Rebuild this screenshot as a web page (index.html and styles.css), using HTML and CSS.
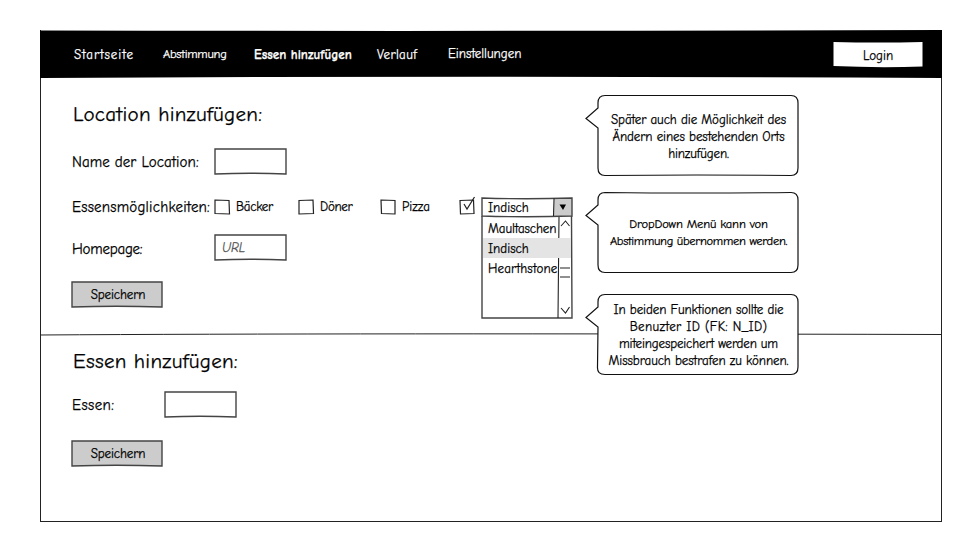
FILE: index.html
```html
<!DOCTYPE html>
<html lang="de">
<head>
<meta charset="utf-8">
<title>Essen hinzufügen</title>
<link rel="stylesheet" href="styles.css">
</head>
<body>
<div class="frame">
  <header class="bar">
    <svg class="sketch" viewBox="0 0 902 48"><path d="M0 .5Q450 1.5 902 0V48Q450 45.5 0 48Z"/></svg>
    <nav class="nav">
      <a class="n1">Startseite</a><a class="n2">Abstimmung</a><a class="n3 active">Essen hinzufügen</a><a class="n4">Verlauf</a><a class="n5">Einstellungen</a>
    </nav>
    <button class="login"><svg class="sketch" viewBox="0 0 90 25"><path class="white" d="M.5 0Q45 1 89.500 0V24.500Q45 26 .5 24Z"/></svg><span>Login</span></button>
  </header>
  <main>
    <section class="location">
      <h1>Location hinzufügen:</h1>
      <div class="row"><label class="l-name"><span>Name der Location:</span></label>
        <div class="field"><svg class="sketch" viewBox="0 0 73 27"><path class="box" d="M1 1H72V26Q36 24.500 1 26Z"/></svg><input aria-label="Name"></div></div>
      <div class="row options"><label class="l-options"><span>Essensmöglichkeiten:</span></label>
        <div class="check c1"><svg viewBox="0 0 16 18"><path d="M1 3L15 3.500L15.500 17L1 16.500Z"/></svg><span>Bäcker</span></div>
        <div class="check c2"><svg viewBox="0 0 16 18"><path d="M1 3.500L15 3L15.500 16.500L1 17Z"/></svg><span>Döner</span></div>
        <div class="check c3"><svg viewBox="0 0 16 18"><path d="M1 3L15 3.500L15 17L1.500 16.500Z"/></svg><span>Pizza</span></div>
        <div class="check c4"><svg viewBox="0 0 16 18"><path d="M1 3.500L14.500 3L15 16.500L1.500 17Z"/><path d="M5 7L8 12L15.500 0"/></svg></div>
        <div class="select">
          <svg class="sketch" viewBox="0 0 92 121"><path class="grey" d="M73 1.500H91V19H73Z"/><path class="box" d="M1 1Q45 2.500 91 1V19Q45 20.500 1 19Z"/><path class="box thin" d="M73 1.500L72.500 19"/><path class="arrow" d="M78.500 7.500H85L82 13Z"/></svg>
          <span class="value">Indisch</span>
          <div class="menu">
            <svg class="sketch" viewBox="0 0 92 103"><path class="box" d="M1 0V102H91L90.500 0"/><path class="box thin" d="M78 1L77 102M80 10L84.500 5L88.500 10M79 52H89M79 61H89M80 92L84.500 97L88.500 91"/></svg>
            <span class="o1"><i>Maultaschen</i></span><span class="o2 chosen"><i>Indisch</i></span><span class="o3"><i>Hearthstone</i></span>
          </div>
        </div>
      </div>
      <div class="row home"><label class="l-home"><span>Homepage:</span></label>
        <div class="field"><svg class="sketch" viewBox="0 0 73 27"><path class="box" d="M1 1H72V26Q36 24.500 1 26Z"/></svg><input aria-label="Homepage" placeholder="URL"></div></div>
      <button class="save"><svg class="sketch" viewBox="0 0 92 27"><path class="box grey" d="M1 1H91V26Q45 24.500 1 26Z"/></svg><span>Speichern</span></button>
    </section>
    <section class="food">
      <svg class="divider" viewBox="0 0 902 3"><path d="M0 2Q300 0 902 1.500"/></svg>
      <h1>Essen hinzufügen:</h1>
      <div class="row"><label class="l-food"><span>Essen:</span></label>
        <div class="field"><svg class="sketch" viewBox="0 0 73 27"><path class="box" d="M1 1H72V26Q36 24.500 1 26Z"/></svg><input aria-label="Essen"></div></div>
      <button class="save"><svg class="sketch" viewBox="0 0 92 27"><path class="box grey" d="M1 1H91V26Q45 24.500 1 26Z"/></svg><span>Speichern</span></button>
    </section>
  </main>
  <aside class="notes">
    <div class="note note-1"><svg class="sketch" viewBox="0 0 214 82"><path d="M20 .5H206Q213 .5 213 8V73Q213 80.500 206 80.500Q110 79.500 20 80.500Q13 80.500 13 73V33L1 23.500L13 13V8Q13 .5 20 .5Z"/></svg>
      <p><span class="t1">Später auch die Möglichkeit des</span><span class="t2">Ändern eines bestehenden Orts</span><span class="t3">hinzufügen.</span></p></div>
    <div class="note note-2"><svg class="sketch" viewBox="0 0 214 82"><path d="M20 .5Q110 1.500 206 .5Q213 .5 213 8V73Q213 80.500 206 80.500H20Q13 80.500 13 73V33L1 23.500L13 13V8Q13 .5 20 .5Z"/></svg>
      <p><span class="t4">DropDown Menü kann von</span><span class="t5">Abstimmung übernommen werden.</span></p></div>
    <div class="note note-3"><svg class="sketch" viewBox="0 0 214 82"><path d="M20 .5H206Q213 .5 213 8V73Q213 80.500 206 80.500H20Q12 80.500 12.500 73L13 33L1 23.500L13 13V8Q13 .5 20 .5Z"/></svg>
      <p><span class="t6">In beiden Funktionen sollte die</span><span class="t7">Benuzter ID (FK: N_ID)</span><span class="t8">miteingespeichert werden um</span><span class="t9">Missbrauch bestrafen zu können.</span></p></div>
  </aside>
</div>
</body>
</html>
```
FILE: styles.css
```css
* { box-sizing: border-box; }
body {
  margin: 0;
  padding: 30px 35px 0 40px;
  background: #fff;
  color: #000;
  font: 13px/17px "Comic Sans MS", "Comic Neue", "Open Sans", sans-serif;
  -webkit-text-stroke: .25px currentColor;
}
button, input { font: inherit; color: inherit; background: none; border: 0; padding: 0; }
svg { display: block; overflow: visible; }
.sketch { position: absolute; inset: 0; width: 100%; height: 100%; }
.frame { position: relative; width: 902px; height: 492px; border: 1px solid #222; border-top: 0; }
.bar { position: relative; height: 48px; margin: 0 -1px; display: flex; align-items: center; color: #fff; }
.nav { position: relative; display: flex; flex: 1; padding: 1px 0 0 34px; white-space: nowrap; }
.nav a { flex: none; }
.n1 { width: 89px; letter-spacing: .9px; }
.nav .n2 { width: 91px; font-size: 12.5px; letter-spacing: -.25px; }
.n3 { width: 123px; }
.n4 { width: 71px; letter-spacing: .35px; }
.n5 { width: 90px; margin-top: -1px; }
.active { font-weight: 700; }
.login { position: relative; width: 90px; height: 25px; margin-right: 19px; color: #000; }
.login span { position: relative; top: 1px; }
.save span { position: relative; left: 1px; }
.white { fill: #fff; }
.box { fill: none; stroke: #444; stroke-width: 1.4; }
.thin { stroke-width: 1.1; stroke: #222; }
.grey { fill: #ccc; }
.location { height: 256px; padding: 22px 0 0 31px; }
h1 { margin: 0; padding-left: 1px; font-size: 21px; line-height: 28px; font-weight: 400; letter-spacing: .27px; white-space: nowrap; }
.row { display: flex; height: 27px; align-items: center; }
.location .row { margin-top: 20px; }
.location .options { margin-top: 18px; }
.location .home { margin-top: 14px; }
.row label { width: 142px; font-size: 15px; line-height: 20px; white-space: nowrap; }
.l-name { letter-spacing: .05px; }
.l-options { letter-spacing: .2px; }
.row .l-home { letter-spacing: -.25px; padding-top: 2px; }
.l-food { letter-spacing: .4px; }
.field { position: relative; width: 73px; height: 27px; }
.field input { position: relative; display: block; width: 100%; height: 26px; padding-left: 8px; outline: 0; }
.field input::placeholder { color: #555; font-style: italic; opacity: 1; }
.check { display: flex; align-items: center; gap: 6px; white-space: nowrap; }
.check svg { width: 16px; height: 18px; fill: none; stroke: #222; stroke-width: 1.2; margin-top: -2px; }
.c1 { width: 84px; letter-spacing: -.3px; }
.c2 { width: 82px; letter-spacing: -.3px; }
.c3 { width: 79px; }
.c4 { width: 22px; }
.select { position: relative; width: 92px; height: 20px; }
.select > .sketch { height: 121px; }
.value { position: relative; display: block; padding: 2px 0 0 7px; }
.arrow { fill: #000; }
.menu { position: absolute; top: 19px; left: 0; width: 92px; height: 103px; padding: 2px 2px 0; }
.menu span { position: relative; display: block; height: 20px; padding: 2px 0 0 5px; line-height: 18px; }
.menu i { font-style: normal; }
.o1 { letter-spacing: -.1px; }
.o3 { letter-spacing: .15px; }
.chosen { background: #e4e4e4; }
.save { position: relative; display: block; width: 92px; height: 27px; margin: 20px 0 0 -1px; letter-spacing: -.1px; }
.food { position: relative; padding: 13px 0 0 31px; }
.divider { position: absolute; left: 0; top: -1px; width: 900px; height: 3px; fill: none; stroke: #222; }
.food .row { margin-top: 16px; }
.food .row label { width: 92px; }
.food .save { margin-top: 22px; }
.notes { position: absolute; left: 544px; top: 65px; width: 214px; }
.note { position: relative; height: 82px; padding-left: 13px; display: flex; align-items: center; justify-content: center; }
.note-2 { margin-top: 15px; }
.note-3 { margin-top: 20px; }
.note .sketch { fill: #fff; stroke: #111; stroke-width: 1.2; }
.note p { position: relative; margin: 0; text-align: center; white-space: nowrap; }
.note p span { display: block; }
.t1, .t2, .t6, .t9 { letter-spacing: -.09px; }
.t3, .t8 { letter-spacing: -.15px; }
.note .t4 { font-size: 12.5px; letter-spacing: -.15px; }
.note .t5 { font-size: 12.5px; letter-spacing: -.3px; }
.t7 { letter-spacing: .36px; }
```
